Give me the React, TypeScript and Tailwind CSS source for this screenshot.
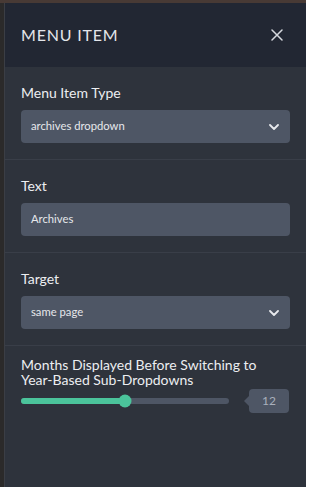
import React from "react";

const FONT = { fontFamily: "Lato, 'Open Sans', sans-serif" };

const Chevron = () => (
  <svg width="10" height="6" viewBox="0 0 10 6" fill="none">
    <polyline points="1,1 5,5 9,1" stroke="#e8eaee" strokeWidth="1.8" strokeLinecap="round" strokeLinejoin="round" />
  </svg>
);

const Field: React.FC<{ label: string; value: string; select?: boolean }> = ({ label, value, select }) => (
  <div className="border-b border-[#393e48] px-[16px] pt-[16px] pb-[16px]">
    <div className="text-[14px] leading-[20px] text-[#eceef1]">{label}</div>
    <div className="mt-[7px] flex h-[33px] items-center justify-between rounded-[4px] bg-[#4e5665] pl-[10px] pr-[11px]">
      <span className="text-[11.25px] text-[#e6e8ec]">{value}</span>
      {select && <Chevron />}
    </div>
  </div>
);

export default function App() {
  const pct = (125 - 21) / 208;
  return (
    <div className="flex h-[487px] w-[306px] flex-col overflow-hidden bg-[#2a2a2b]" style={FONT}>
      <div className="h-[3px] bg-[#483a35]" />
      <div className="flex flex-1">
        <div className="w-[4px] bg-[#2b2a2a]" />
        <div className="flex flex-1 flex-col border-l border-[#3b3e45] bg-[#2e333c]">
          <div className="flex h-[64px] items-center justify-between bg-[#222733] pl-[16px] pr-[23px]">
            <span className="text-[16px] tracking-[0.8px] text-[#e4e6ea]">MENU ITEM</span>
            <svg width="12" height="12" viewBox="0 0 12 12" fill="none">
              <path d="M1 1 L11 11 M11 1 L1 11" stroke="#d6d9de" strokeWidth="1.5" strokeLinecap="round" />
            </svg>
          </div>
          <Field label="Menu Item Type" value="archives dropdown" select />
          <Field label="Text" value="Archives" />
          <Field label="Target" value="same page" select />
          <div className="px-[16px] pt-[11px]">
            <div className="text-[14px] leading-[15px] text-[#eceef1]">
              Months Displayed Before Switching to Year-Based Sub-Dropdowns
            </div>
            <div className="mt-[2px] flex h-[24px] items-center">
              <div className="relative h-[6px] w-[208px] rounded-full bg-[#4e5665]">
                <div className="h-full rounded-full bg-[#4bc49b]" style={{ width: `${pct * 100}%` }} />
                <div
                  className="absolute top-1/2 h-[13px] w-[13px] -translate-x-1/2 -translate-y-1/2 rounded-full bg-[#4bc49b]"
                  style={{ left: `${pct * 100}%` }}
                />
              </div>
              <div className="relative ml-[20px] flex h-[24px] w-[40px] items-center justify-center rounded-[4px] bg-[#4e5665]">
                <div className="absolute left-[-5px] top-1/2 h-0 w-0 -translate-y-1/2 border-y-[5px] border-r-[5px] border-y-transparent border-r-[#4e5665]" />
                <span className="text-[12px] text-[#a9b0bc]">12</span>
              </div>
            </div>
          </div>
        </div>
      </div>
    </div>
  );
}
